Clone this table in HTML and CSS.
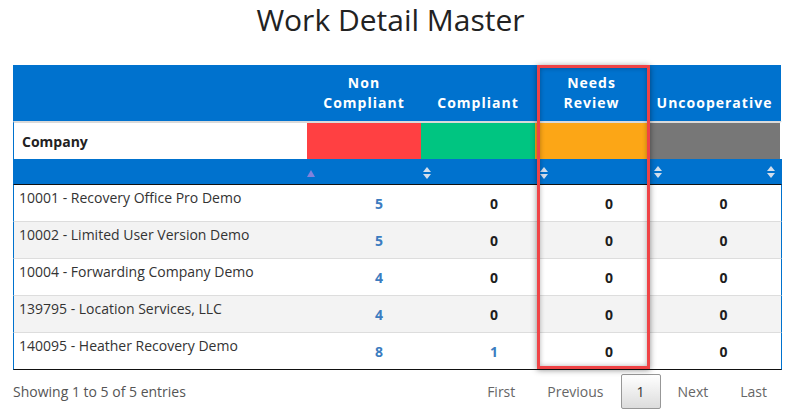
FILE: index.html
```html
<!DOCTYPE html>
<html>
<head>
<meta charset="utf-8">
<link rel="stylesheet" href="styles.css">
</head>
<body>
<div class="page">
  <h1 class="title">Work Detail Master</h1>
  <div class="table-wrap">
    <table class="grid">
      <colgroup>
        <col class="c1"><col class="c2"><col class="c3"><col class="c4"><col class="c5">
      </colgroup>
      <thead>
        <tr class="h-top">
          <th></th>
          <th>Non<br>Compliant</th>
          <th>Compliant</th>
          <th>Needs<br>Review</th>
          <th>Uncooperative</th>
        </tr>
        <tr class="h-color">
          <th class="company">Company</th>
          <th class="sw red"></th>
          <th class="sw green"></th>
          <th class="sw orange"></th>
          <th class="sw gray"></th>
        </tr>
        <tr class="h-sort">
          <th class="s1"></th>
          <th class="s2"><span class="tri-up"></span></th>
          <th class="s3"><span class="both"><i class="u"></i><i class="d"></i></span></th>
          <th class="s4"><span class="both"><i class="u"></i><i class="d"></i></span></th>
          <th class="s5"><div class="pair"><span class="both"><i class="u"></i><i class="d"></i></span><span class="both"><i class="u"></i><i class="d"></i></span></div></th>
        </tr>
      </thead>
      <tbody>
        <tr>
          <td class="name">10001 - Recovery Office Pro Demo</td>
          <td class="n n2 link">5</td><td class="n n3">0</td><td class="n n4">0</td><td class="n n5">0</td>
        </tr>
        <tr class="odd">
          <td class="name">10002 - Limited User Version Demo</td>
          <td class="n n2 link">5</td><td class="n n3">0</td><td class="n n4">0</td><td class="n n5">0</td>
        </tr>
        <tr>
          <td class="name">10004 - Forwarding Company Demo</td>
          <td class="n n2 link">4</td><td class="n n3">0</td><td class="n n4">0</td><td class="n n5">0</td>
        </tr>
        <tr class="odd">
          <td class="name">139795 - Location Services, LLC</td>
          <td class="n n2 link">4</td><td class="n n3">0</td><td class="n n4">0</td><td class="n n5">0</td>
        </tr>
        <tr class="last">
          <td class="name">140095 - Heather Recovery Demo</td>
          <td class="n n2 link">8</td><td class="n n3 link">1</td><td class="n n4">0</td><td class="n n5">0</td>
        </tr>
      </tbody>
    </table>
    <div class="highlight"></div>
  </div>
  <div class="footer">
    <div class="info">Showing 1 to 5 of 5 entries</div>
    <div class="pager">
      <span class="btn">First</span>
      <span class="btn">Previous</span>
      <span class="btn current">1</span>
      <span class="btn">Next</span>
      <span class="btn">Last</span>
    </div>
  </div>
</div>
</body>
</html>
```

FILE: styles.css
```css
html, body {
  margin: 0;
  padding: 0;
  background: #fff;
}
body {
  font-family: "Open Sans", "Noto Sans", sans-serif;
  font-size: 14px;
  color: #333;
}
.page {
  padding: 0 11px 0 13px;
}
.title {
  margin: 0 0 25px 0;
  padding-right: 14px;
  font-size: 30px;
  line-height: 40px;
  font-weight: 400;
  color: #222;
  text-align: center;
}
.table-wrap {
  position: relative;
}
.grid {
  width: 769px;
  table-layout: fixed;
  border-collapse: separate;
  border-spacing: 0;
}
col.c1 { width: 294px; }
col.c2 { width: 114px; }
col.c3 { width: 114px; }
col.c4 { width: 113px; }
col.c5 { width: 134px; }

.grid th, .grid td {
  padding: 0;
  box-sizing: border-box;
}
.h-top th {
  background: #0072ce;
  color: #fff;
  font-weight: 700;
  font-size: 14px;
  line-height: 20px;
  letter-spacing: 1px;
  text-align: center;
  vertical-align: bottom;
  height: 56px;
  padding: 8px 0;
}
.h-top th:last-child {
  border-right: 1px solid #fff;
}
.h-color th {
  height: 38px;
  border-top: 2px solid #dadada;
}
.h-color .company {
  background: #fff;
  border-left: 1px solid #0072ce;
  text-align: left;
  padding: 1px 8px 0 8px;
  font-weight: 700;
  color: #222;
  vertical-align: middle;
}
.sw.red { background: #ff4042; }
.sw.green { background: #00c581; }
.sw.orange { background: #fca616; }
.sw.gray { background: #777777; border-right: 2px solid #fff; }

.h-sort th {
  background: #0072ce;
  height: 26px;
  border-bottom: 1px solid #111;
  vertical-align: middle;
  text-align: left;
}
.h-sort .s1 { border-left: 1px solid #0072ce; }
.h-sort .s5 { border-right: 1px solid #0072ce; }
.h-sort th.s2 { padding-left: 0; }
.h-sort th.s3 { padding-left: 2px; }
.h-sort th.s4 { padding-left: 5px; }
.h-sort th.s5 {
  padding: 0 6px 0 6px;
}
.pair {
  display: flex;
  justify-content: space-between;
  align-items: center;
}
.tri-up {
  display: inline-block;
  width: 0;
  height: 0;
  border-left: 4.5px solid transparent;
  border-right: 4.5px solid transparent;
  border-bottom: 7px solid #8282dc;
  vertical-align: middle;
}
.both {
  display: inline-flex;
  flex-direction: column;
  gap: 2px;
  vertical-align: middle;
}
.both .u, .both .d {
  display: block;
  width: 0;
  height: 0;
  border-left: 4px solid transparent;
  border-right: 4px solid transparent;
}
.both .u { border-bottom: 5px solid #d3deec; }
.both .d { border-top: 5px solid #d3deec; }

.grid tbody td {
  height: 37px;
  border-bottom: 1px solid #dddddd;
  background: #fff;
}
.grid tbody tr.odd td {
  background: #f3f3f3;
}
.grid tbody tr.last td {
  border-bottom: 1px solid #111;
}
.grid tbody td:first-child {
  border-left: 1px solid #0072ce;
}
.grid tbody td:last-child {
  border-right: 1px solid #0072ce;
}
td.name {
  vertical-align: top;
  padding: 3px 5px 0 5px;
  line-height: 20px;
  color: #333;
  white-space: nowrap;
}
td.n {
  vertical-align: middle;
  text-align: center;
  font-weight: 700;
  color: #1d1d1d;
  padding-top: 1px;
}
td.n2 { padding-left: 30px; }
td.n3 { padding-left: 32px; }
td.n4 { padding-left: 35px; }
td.n5 { padding-left: 18px; }
td.link { color: #3b7cc0; }

.highlight {
  position: absolute;
  left: 524px;
  top: 0;
  width: 113px;
  height: 304px;
  box-sizing: border-box;
  border: 3px solid #ef4346;
  box-shadow: 0 1px 6px rgba(0, 0, 0, 0.45), inset 0 0 5px rgba(0, 0, 0, 0.3);
  pointer-events: none;
}

.footer {
  display: flex;
  justify-content: space-between;
  align-items: center;
  margin-top: 4px;
  width: 769px;
}
.info {
  color: #555;
  line-height: 19px;
}
.pager {
  display: flex;
  align-items: center;
}
.btn {
  display: inline-block;
  padding: 7px 14px;
  margin-left: 2px;
  border: 1px solid transparent;
  border-radius: 2px;
  line-height: 19px;
  color: #666;
}
.btn.current {
  color: #333;
  border: 1px solid #979797;
  background: linear-gradient(to bottom, #ffffff 0%, #dcdcdc 100%);
  padding: 7px 15px;
}
```
